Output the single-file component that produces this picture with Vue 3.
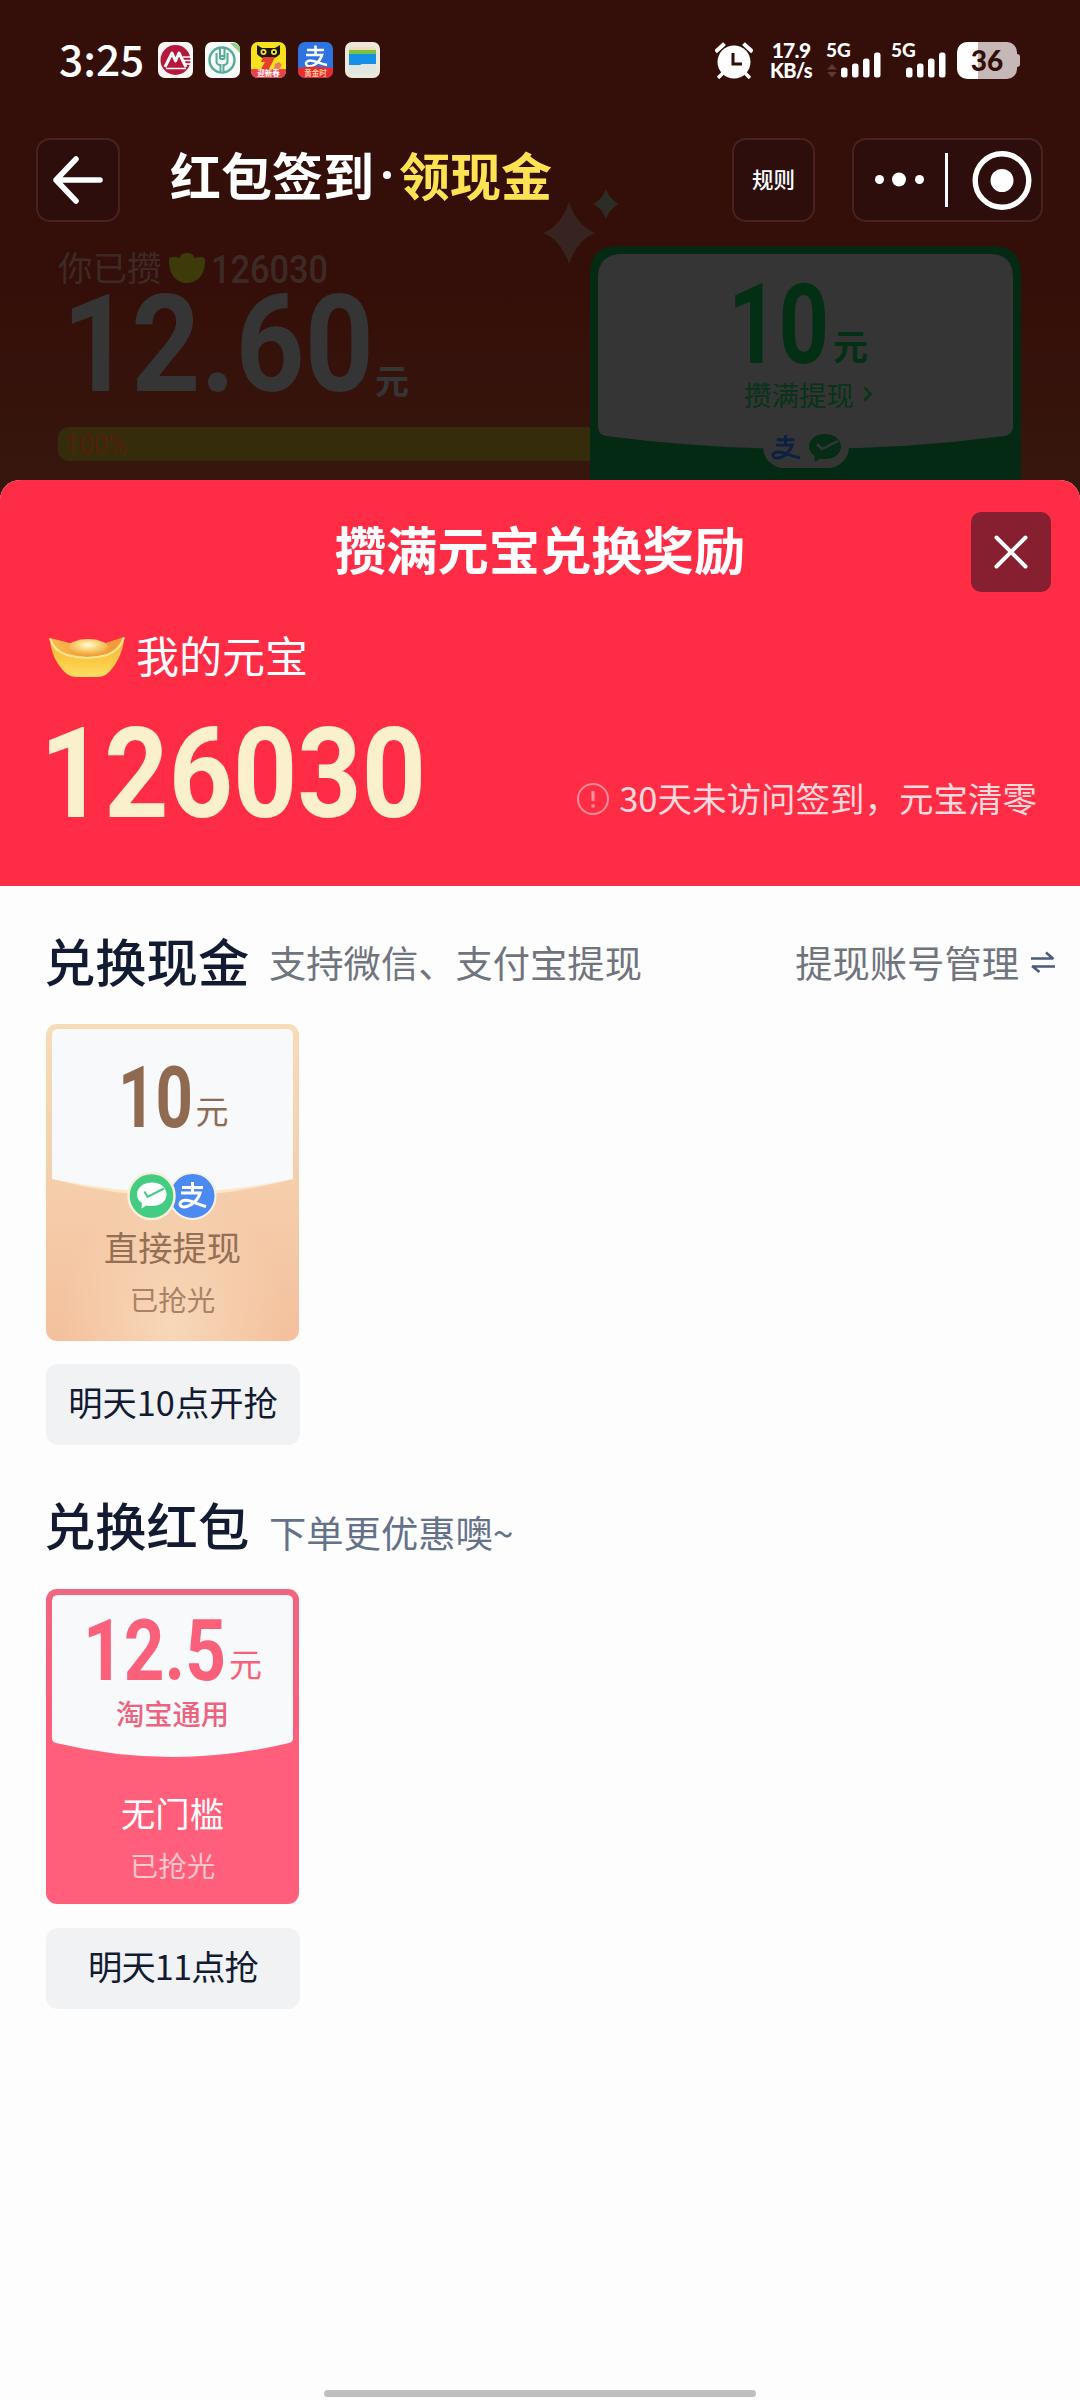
<script setup>
const signalBars = [
  { x: 0, h: 10 },
  { x: 11, h: 14 },
  { x: 22, h: 19 },
  { x: 33, h: 25 }
]
</script>

<template>
  <div class="page">
    <header class="status">
      <span class="clock">3:25</span>
      <div class="apps">
        <svg class="app" viewBox="0 0 35 36">
          <rect width="35" height="36" rx="7" fill="#fbf6f6" />
          <circle cx="17.5" cy="18" r="15" fill="#b5183a" />
          <path d="M7 25 L14 11 L17.5 19 L21 11 L28 25" fill="none" stroke="#fff" stroke-width="3" stroke-linejoin="round" />
          <path d="M8 26.500H28M25 15h8M26 18.500h8M27 22h7" stroke="#fff" stroke-width="1.400" />
        </svg>
        <svg class="app" viewBox="0 0 35 36">
          <rect width="35" height="36" rx="7" fill="#f7fbf9" />
          <path d="M25 1h4a6 6 0 0 1 6 6v4z" fill="#8fd088" />
          <circle cx="17" cy="18" r="12.500" fill="none" stroke="#57ab98" stroke-width="2.400" />
          <path d="M15 5v12M19.500 5v12M11.500 11v9q0 2 3 3h1v6M22.500 11v9q0 2-3 3h-1v6M15 14h4.500M15 17h4.500" fill="none" stroke="#57ab98" stroke-width="2" />
        </svg>
        <svg class="app" viewBox="0 0 35 36">
          <rect width="35" height="36" rx="7" fill="#f7e11c" />
          <path d="M6 3l5 3h13l5-3v9q-4 5-11.500 5T6 12z" fill="#1c1712" />
          <circle cx="12.500" cy="10" r="3" fill="#f5df3a" /><circle cx="23" cy="10" r="3" fill="#f5df3a" />
          <circle cx="12.500" cy="10" r="1.200" /><circle cx="23" cy="10" r="1.200" />
          <path d="M12 15h12l-6 12h-8l4-7h-4z" fill="#e5402e" />
          <path d="M24 22l4-2 3 3-3 4h-5z" fill="#ef7a58" />
          <path d="M0 27h35v2a7 7 0 0 1-7 7H7a7 7 0 0 1-7-7z" fill="#e8424b" />
          <text x="17.500" y="34.300" class="app-tag">迎新春</text>
        </svg>
        <svg class="app" viewBox="0 0 35 36">
          <rect width="35" height="36" rx="7" fill="#2e74e0" />
          <path d="M9 8h17M17.500 3.500v9M8 13h16q-2 6-7 9.500-5 3-8 1-2.500-2.500 1-4.500c4-2 9 2 19 4" fill="none" stroke="#fff" stroke-width="2.500" />
          <path d="M0 26q17-3 35 0v3a7 7 0 0 1-7 7H7a7 7 0 0 1-7-7z" fill="#ea2c2c" />
          <text x="17.500" y="34" class="app-tag gold">黄金时</text>
        </svg>
        <svg class="app" viewBox="0 0 35 36">
          <rect width="35" height="36" rx="7" fill="#ede8dc" />
          <path d="M4 10V8q0-3 3-3h20q4 0 4 4v2z" fill="#f2ddb8" />
          <rect x="4" y="8" width="27" height="4" fill="#7cc142" />
          <path d="M4 12h27v10H18l-3 1H4z" fill="#1590e6" />
          <path d="M4 23h11l3-1h13v7q0 3-3 3H7q-3 0-3-3z" fill="#dfe7df" />
        </svg>
      </div>

      <div class="status-right">
        <svg class="alarm" viewBox="0 0 38 37">
          <circle cx="19" cy="20" r="16.500" fill="#fff" />
          <path d="M2 8.500L8 3M36 8.500L30 3" stroke="#fff" stroke-width="4" stroke-linecap="square" />
          <path d="M8 31l-5 5M30 31l5 5" stroke="#fff" stroke-width="3.500" />
          <path d="M18 11v11h9" fill="none" stroke="#330e08" stroke-width="3" />
        </svg>
        <div class="speed"><span>17.9</span><span>KB/s</span></div>
        <div class="net">
          <span class="gen">5G</span>
          <svg viewBox="0 0 55 26" width="55" height="26">
            <path d="M0 17l5-5.500 5 5.500zM0 19.500l5 5.500 5-5.500z" transform="translate(0,.5)" fill="#5d3a34" />
            <rect v-for="b in signalBars" :key="b.x" :x="b.x + 14" :y="25.500 - b.h" width="6.500" :height="b.h" rx="2.500" fill="#fff" />
          </svg>
        </div>
        <div class="net second">
          <span class="gen">5G</span>
          <svg viewBox="0 0 55 26" width="55" height="26">
            <rect v-for="b in signalBars" :key="b.x" :x="b.x + 14" :y="25.500 - b.h" width="6.500" :height="b.h" rx="2.500" fill="#fff" />
          </svg>
        </div>
        <div class="battery"><span>36</span></div>
      </div>
    </header>

    <nav class="nav">
      <button class="box back">
        <svg width="52" height="50" viewBox="0 0 52 50">
          <path d="M24 4L4 25l20 21M4 25h44" fill="none" stroke="#fff" stroke-width="5.500" stroke-linecap="round" stroke-linejoin="round" />
        </svg>
      </button>
      <h1 class="title">红包签到<i></i><em>领现金</em></h1>
      <button class="box rules">规则</button>
      <div class="box capsule">
        <svg width="191" height="84" viewBox="0 0 191 84">
          <g fill="#fff">
            <circle cx="27.500" cy="41.500" r="4.500" /><circle cx="47" cy="41.500" r="7" /><circle cx="67.500" cy="41.500" r="4.500" />
            <rect x="93" y="15" width="3" height="54" />
            <circle cx="150" cy="42.500" r="11.500" />
          </g>
          <circle cx="150" cy="42.500" r="26.800" fill="none" stroke="#fff" stroke-width="5.400" />
        </svg>
      </div>
    </nav>

    <section class="hero">
      <div class="saved">
        <div class="saved-line">
          <span>你已攒</span>
          <svg width="40" height="32" viewBox="0 0 40 32">
            <path d="M2 10q-1-5 4-5 4 0 7 1 0-5 7-5t7 5q3-1 7-1 5 0 4 5c0 13-8 21-18 21S2 23 2 10z" fill="#3d3b0a" />
          </svg>
          <svg class="num" width="122" height="40"><text x="1" y="35" font-size="38" textLength="117" lengthAdjust="spacingAndGlyphs" font-weight="500">126030</text></svg>
        </div>
        <div class="amount">
          <svg class="num" width="315" height="110"><text x="2" y="103" font-size="135" textLength="312" lengthAdjust="spacingAndGlyphs">12.60</text></svg>
          <span>元</span>
        </div>
        <div class="bar">
          <svg class="num" width="70" height="34"><text x="7" y="27" font-size="28" textLength="62" lengthAdjust="spacingAndGlyphs" font-weight="400">100%</text></svg>
        </div>
      </div>

      <div class="cash-card">
        <svg class="cash-bg" width="431" height="234" viewBox="0 0 431 234">
          <path d="M0 234V28Q0 0 28 0H403Q431 0 431 28V234z" fill="#042a13" />
          <path d="M8 32Q8 8 32 8H400Q423 8 423 32V180Q423 188 415 190Q215 216 16 190Q8 189 8 180z" fill="#353535" />
          <rect x="173" y="180" width="86" height="42" rx="21" fill="#353535" />
        </svg>
        <div class="cash-amount">
          <svg class="num" width="100" height="96"><text x="-2" y="96" font-size="112" textLength="101" lengthAdjust="spacingAndGlyphs">10</text></svg>
          <span>元</span>
        </div>
        <div class="cash-label">
          攒满提现
          <svg width="10" height="16" viewBox="0 0 10 16"><path d="M1.500 1.500L7.500 8l-6 6.500" fill="none" stroke="#06331a" stroke-width="2.500" /></svg>
        </div>
        <div class="cash-pay">
          <svg width="34" height="30" viewBox="0 0 35 29">
            <path d="M8 6h18M17 1v10M7 11.500h17q-2 6-7 10-6 4.500-11 3-4-2.500 0-5c5-3 14 2.500 26 5" fill="none" stroke="#0d2043" stroke-width="3" />
          </svg>
          <svg width="34" height="30" viewBox="0 0 34 30">
            <path d="M17 1C7.500 1 1 6.500 1 13.500c0 4 2 7 5.500 9.500L7 29l5-3.500q2.500.5 5 .5c9.500 0 16-5.500 16-12.500S26.500 1 17 1z" fill="#052c14" />
            <path d="M9 11l5 5L30 8" fill="none" stroke="#353535" stroke-width="2.500" />
          </svg>
        </div>
      </div>
      <svg class="sparkles" width="80" height="80" viewBox="0 0 80 80">
        <path d="M27 15Q35 39 53 46Q35 53 27 77Q19 53 1 46Q19 39 27 15z" fill="#372421" />
        <path d="M64 2Q68 13 77 17Q68 21 64 32Q60 21 51 17Q60 13 64 2z" fill="#2d2d26" />
      </svg>
    </section>

    <main class="sheet">
      <section class="wallet">
        <div class="wallet-head">
          <h2>攒满元宝兑换奖励</h2>
          <button class="close">
            <svg width="36" height="36" viewBox="0 0 36 36"><path d="M3.500 3.500l29 29M32.500 3.500l-29 29" stroke="#fff" stroke-width="4" stroke-linecap="round" /></svg>
          </button>
        </div>
        <div class="mine">
          <svg width="76" height="42" viewBox="0 0 76 42">
            <defs>
              <linearGradient id="gold" x1="0" y1="0" x2="0" y2="1"><stop offset="0" stop-color="#f3b145" /><stop offset=".6" stop-color="#fcc944" /><stop offset="1" stop-color="#fbe063" /></linearGradient>
              <linearGradient id="rim" x1="0" y1="0" x2="1" y2="0"><stop offset="0" stop-color="#f9bb50" /><stop offset=".5" stop-color="#eda03a" /><stop offset="1" stop-color="#f39b3a" /></linearGradient>
              <radialGradient id="dome" cx=".5" cy=".35" r=".6"><stop offset="0" stop-color="#fffbe0" /><stop offset=".45" stop-color="#fbd77a" /><stop offset="1" stop-color="#f0a23b" /></radialGradient>
            </defs>
            <path d="M1 2Q10 4 18 7H58Q66 4 75 1C75 15 67 30 58 38Q54 41 48 41H28Q22 41 18 38C8 30 1 15 1 2z" fill="url(#gold)" />
            <path d="M2 3Q10 4 20 7H57Q66 4 74 2Q71 13 58 18Q38 24 18 18Q7 14 2 3z" fill="url(#rim)" />
            <ellipse cx="39" cy="11.500" rx="20" ry="8.500" fill="url(#dome)" />
            <path d="M1 2.500Q5 15 18 19Q38 25 58 19Q71 14 75 1.500" fill="none" stroke="#fde58b" stroke-width="2.200" />
          </svg>
          <span>我的元宝</span>
        </div>
        <div class="balance">
          <svg class="num" width="400" height="110"><text x="3" y="102" font-size="127" textLength="386" lengthAdjust="spacingAndGlyphs">126030</text></svg>
          <p class="notice">
            <svg width="34" height="34" viewBox="0 0 34 34">
              <circle cx="17" cy="17" r="15" fill="none" stroke="#ff8f9b" stroke-width="2" />
              <path d="M17 9v10M17 22.500v3" stroke="#ff8f9b" stroke-width="3.200" />
            </svg>
            30天未访问签到，元宝清零
          </p>
        </div>
      </section>

      <section class="group cash">
        <div class="group-head">
          <h3>兑换现金</h3>
          <span class="sub">支持微信、支付宝提现</span>
          <span class="manage">提现账号管理
            <svg width="24" height="24" viewBox="0 0 24 24"><path d="M0 8.500h22M22.500 9L15 2.500M1 16.500h23M1 16l7.500 6" fill="none" stroke="#4c5a7d" stroke-width="2.600" /></svg>
          </span>
        </div>
        <article class="coupon tan">
          <svg class="coupon-bg" width="253" height="317" viewBox="0 0 253 317">
            <defs>
              <linearGradient id="tan" x1="0" y1="0" x2="0" y2="1"><stop offset="0" stop-color="#f6dcb8" /><stop offset=".5" stop-color="#f5ceac" /><stop offset="1" stop-color="#f4c09d" /></linearGradient>
              <radialGradient id="glow" cx=".5" cy=".95" r=".45"><stop offset="0" stop-color="#f7d8b8" /><stop offset="1" stop-color="#f7d8b8" stop-opacity="0" /></radialGradient>
              <linearGradient id="edge" x1="0" y1="0" x2="1" y2="0"><stop offset="0" stop-color="#fbdcae" stop-opacity="0" /><stop offset=".3" stop-color="#fde7c4" /><stop offset=".7" stop-color="#fde7c4" /><stop offset="1" stop-color="#fbdcae" stop-opacity="0" /></linearGradient>
            </defs>
            <rect width="253" height="317" rx="11" fill="url(#tan)" />
            <rect width="253" height="317" rx="11" fill="url(#glow)" />
            <path d="M6 11Q6 5 12 5H241Q247 5 247 11V155Q127 185 6 155z" fill="#f7f9fb" />
            <path d="M6 155Q127 185 247 155" fill="none" stroke="url(#edge)" stroke-width="3" />
          </svg>
          <div class="price">
            <svg class="num" width="76" height="62"><text x="1" y="61" font-size="85" textLength="75" lengthAdjust="spacingAndGlyphs">10</text></svg>
            <span>元</span>
          </div>
          <svg class="pay" width="94" height="50" viewBox="0 0 94 50">
            <circle cx="66.500" cy="25" r="23" fill="#4b8af0" stroke="#f5f1e8" stroke-width="2" />
            <path d="M56 16.500h21M66.500 11v10M55 22h19q-2 7-8 11-6 4-10.500 2.500-3.500-2.500.5-5.500c6-3 13 3 24 5.500" fill="none" stroke="#fff" stroke-width="3" />
            <circle cx="25.500" cy="25" r="23" fill="#45cc83" stroke="#f7efd9" stroke-width="2.500" />
            <path d="M26 11.500c-9 0-15 5.500-15 12 0 4 2 6.500 5 8.500l-.5 5.500 5-3q2.500.5 5.500.5c9 0 14.500-5 14.500-11.500S35 11.500 26 11.500z" fill="#fff" />
            <path d="M18.500 20.500l3 5.500L38 17.500" fill="none" stroke="#45cc83" stroke-width="2" />
          </svg>
          <p class="kind">直接提现</p>
          <p class="state">已抢光</p>
        </article>
        <button class="slot">明天10点开抢</button>
      </section>

      <section class="group packet">
        <div class="group-head">
          <h3>兑换红包</h3>
          <span class="sub">下单更优惠噢~</span>
        </div>
        <article class="coupon rose">
          <svg class="coupon-bg" width="253" height="315" viewBox="0 0 253 315">
            <defs><linearGradient id="rose" x1="0" y1="0" x2="0" y2="1"><stop offset="0" stop-color="#f0657f" /><stop offset=".5" stop-color="#ff5f7a" /><stop offset="1" stop-color="#ff5f7a" /></linearGradient></defs>
            <rect width="253" height="315" rx="11" fill="url(#rose)" />
            <path d="M6 12Q6 6 12 6H241Q247 6 247 12V149Q247 153 243 154Q127 182 10 154Q6 153 6 149z" fill="#f7f9fb" />
          </svg>
          <div class="price">
            <svg class="num" width="143" height="62"><text x="0" y="61" font-size="85" textLength="143" lengthAdjust="spacingAndGlyphs">12.5</text></svg>
            <span>元</span>
          </div>
          <p class="scope">淘宝通用</p>
          <p class="kind">无门槛</p>
          <p class="state">已抢光</p>
        </article>
        <button class="slot narrow">明天11点抢</button>
      </section>
      <div class="home-bar"></div>
    </main>
  </div>
</template>

<style>
body { margin: 0; background: #fdfdfd; }
</style>

<style scoped>
.page {
  width: 1080px; height: 2400px; overflow: hidden; box-sizing: border-box;
  font-family: "Noto Sans CJK SC", sans-serif;
  background: linear-gradient(#340e08 0, #340e08 260px, #36170e 500px, #36170e 100%);
}
h1, h2, h3, p { margin: 0; font-weight: inherit; }
button { font: inherit; border: 0; padding: 0; margin: 0; color: inherit; }
svg { display: block; flex: none; }
span { white-space: nowrap; }
.num { overflow: visible; font-family: Roboto, sans-serif; font-weight: 700; fill: currentColor; }

.status { display: flex; align-items: center; height: 120px; padding-left: 59px; color: #fff; }
.clock { width: 99px; margin-top: -4px; font-size: 42.500px; font-weight: 500; line-height: 60px; }
.apps { display: flex; gap: 11.700px; }
.app { width: 35px; height: 36px; }
.app-tag { font-size: 7.500px; font-weight: 700; fill: #fff; text-anchor: middle; }
.app-tag.gold { fill: #ffc9a0; }
.status-right { display: flex; align-items: center; margin-left: auto; padding-right: 63px; font-family: Lato, sans-serif; font-weight: 900; }
.alarm { width: 38px; height: 37px; }
.speed { display: flex; flex-direction: column; width: 44px; margin: -1px 0 0 16px; font-size: 20px; line-height: 20px; align-items: center; letter-spacing: -.7px; }
.speed span:first-child { font-size: 21px; }
.net { position: relative; width: 55px; height: 36px; margin-left: 14px; display: flex; align-items: flex-end; }
.net.second { margin-left: 10px; }
.gen { position: absolute; left: -1px; top: -2px; font-size: 19px; line-height: 19px; }
.battery {
  position: relative; width: 60px; height: 37px; margin-left: 10px; border-radius: 10px; text-align: center;
  background: linear-gradient(90deg, #fff 21px, #c6b8b6 21px); color: #330e08; font-size: 28px; line-height: 36px;
}
.battery::after { content: ""; position: absolute; left: 60px; top: 12px; width: 3px; height: 13px; background: #c6b8b6; border-radius: 0 3px 3px 0; }

.nav { display: flex; align-items: center; height: 84px; margin-top: 18px; padding: 0 30px 0 36px; color: #fff; }
.box { box-sizing: border-box; flex: none; display: flex; align-items: center; justify-content: center; height: 84px; border: 2px solid #49221f; border-radius: 14px; background: #2d0e0d; }
.back { width: 84px; }
.title { margin: -12px 0 0 50px; width: 562px; flex: none; font-size: 51px; font-weight: 700; line-height: 70px; display: flex; align-items: center; }
.title i { width: 8px; height: 8px; margin: 2px 8px 0 9px; border-radius: 50%; background: #fff; }
.title em { font-style: normal; color: #fde354; }
.rules { width: 83px; font-size: 21.500px; font-weight: 500; padding-bottom: 4px; }
.capsule { width: 191px; margin-left: 37px; }

.hero { position: relative; display: flex; height: 258px; }
.saved { width: 590px; padding-top: 26px; color: #3b2925; }
.saved-line { display: flex; align-items: center; height: 40px; padding-left: 58px; font-size: 34.500px; line-height: 36px; color: #3d2a27; }
.saved-line span { margin-top: -4px; width: 109px; }
.saved-line .num { margin-left: 3px; }
.amount { display: flex; align-items: flex-end; height: 110px; padding-left: 60px; color: #353535; }
.amount span { font-size: 34px; font-weight: 700; line-height: 36px; }
.bar { height: 34px; margin: 29px 0 0 58px; border-radius: 10px 0 0 10px; background: #352c0b; color: #561f0b; }

.cash-card { position: relative; width: 431px; height: 234px; margin-top: 24px; display: flex; flex-direction: column; align-items: center; color: #032f15; }
.cash-bg { position: absolute; inset: 0; }
.cash-amount, .cash-label, .cash-pay { position: relative; display: flex; }
.cash-amount { height: 96px; margin: 21px 0 0 -13px; align-items: flex-end; }
.cash-amount span { font-size: 35px; font-weight: 700; line-height: 36px; margin-left: 3px; }
.cash-label { align-items: center; gap: 9px; margin: 14px 0 0 6px; font-size: 27.500px; line-height: 34px; color: #06331a; }
.cash-pay { gap: 5px; margin-top: 22px; }
.sparkles { position: absolute; left: 542px; top: -35px; }

.sheet { position: relative; height: 1920px; background: #fdfdfd; border-radius: 20px 20px 0 0; overflow: hidden; }
.wallet { height: 406px; background: #ff2c46; color: #fff; }
.wallet-head { display: flex; height: 112px; padding: 32px 29px 0 0; box-sizing: border-box; justify-content: flex-end; }
.wallet-head h2 { flex: 1; padding-left: 109px; text-align: center; font-size: 51.300px; font-weight: 700; line-height: 72px; }
.close { width: 80px; height: 80px; border-radius: 10px; background: #861f2f; display: flex; align-items: center; justify-content: center; }
.mine { display: flex; align-items: center; height: 60px; margin-top: 34px; padding-left: 49px; font-size: 43px; line-height: 60px; }
.mine svg { margin-top: 2px; }
.mine span { margin: -5px 0 0 11px; }
.balance { display: flex; justify-content: space-between; margin-top: 29px; padding: 0 43px 0 37px; color: #fbf0cc; }
.notice { display: flex; align-items: center; gap: 9px; height: 44px; margin-top: 60px; font-size: 34.500px; line-height: 44px; white-space: nowrap; color: #ffd9dc; }
.notice svg { margin-top: 4px; }

.group { padding-left: 46px; }
.group-head { display: flex; align-items: center; height: 70px; }
.cash .group-head { margin-top: 39px; }
.packet .group-head { margin-top: 44px; }
.group-head h3 { margin-left: -2px; width: 225px; font-size: 51.300px; font-weight: 500; line-height: 70px; color: #131b33; }
.sub { padding-top: 4px; font-size: 37.300px; line-height: 50px; color: #70747d; }
.manage { display: flex; gap: 12px; align-items: center; margin-left: auto; padding: 4px 25px 0 0; font-size: 37.300px; line-height: 50px; color: #70747d; }
.packet .sub { padding-top: 16px; color: #64718a; }

.coupon { position: relative; width: 253px; display: flex; flex-direction: column; align-items: center; }
.coupon-bg { position: absolute; inset: 0; }
.coupon > :not(.coupon-bg) { position: relative; }
.tan { height: 317px; margin-top: 29px; color: #8f6a50; }
.rose { height: 315px; margin-top: 30px; color: #fa607a; }
.price { display: flex; align-items: flex-end; height: 62px; }
.price span { font-size: 33px; line-height: 36px; margin-left: 3px; }
.tan .price { margin-top: 42px; }
.rose .price { margin-top: 30px; }
.pay { margin: 43px 0 0 1px; }
.kind { font-size: 34.300px; line-height: 46px; }
.state { font-size: 28.500px; line-height: 40px; }
.tan .kind { margin-top: 2px; color: #946f55; }
.tan .state { margin-top: 10px; color: #ab8266; }
.scope { margin-top: 12px; font-size: 28.300px; font-weight: 500; line-height: 40px; color: #ec6380; }
.rose .kind { margin-top: 56px; color: #fff; }
.rose .state { margin-top: 10px; color: #ffc6cc; }
.slot { display: block; width: 254px; height: 81px; padding-bottom: 7px; margin-top: 23px; border-radius: 12px; background: #f1f2f4; color: #131b33; font-size: 34.300px; line-height: 74px; text-align: center; }
.slot.narrow { margin-top: 24px; letter-spacing: -.9px; }
.home-bar { position: absolute; left: 324px; bottom: 3px; width: 432px; height: 7px; border-radius: 4px; background: #bfbfbf; }
</style>
